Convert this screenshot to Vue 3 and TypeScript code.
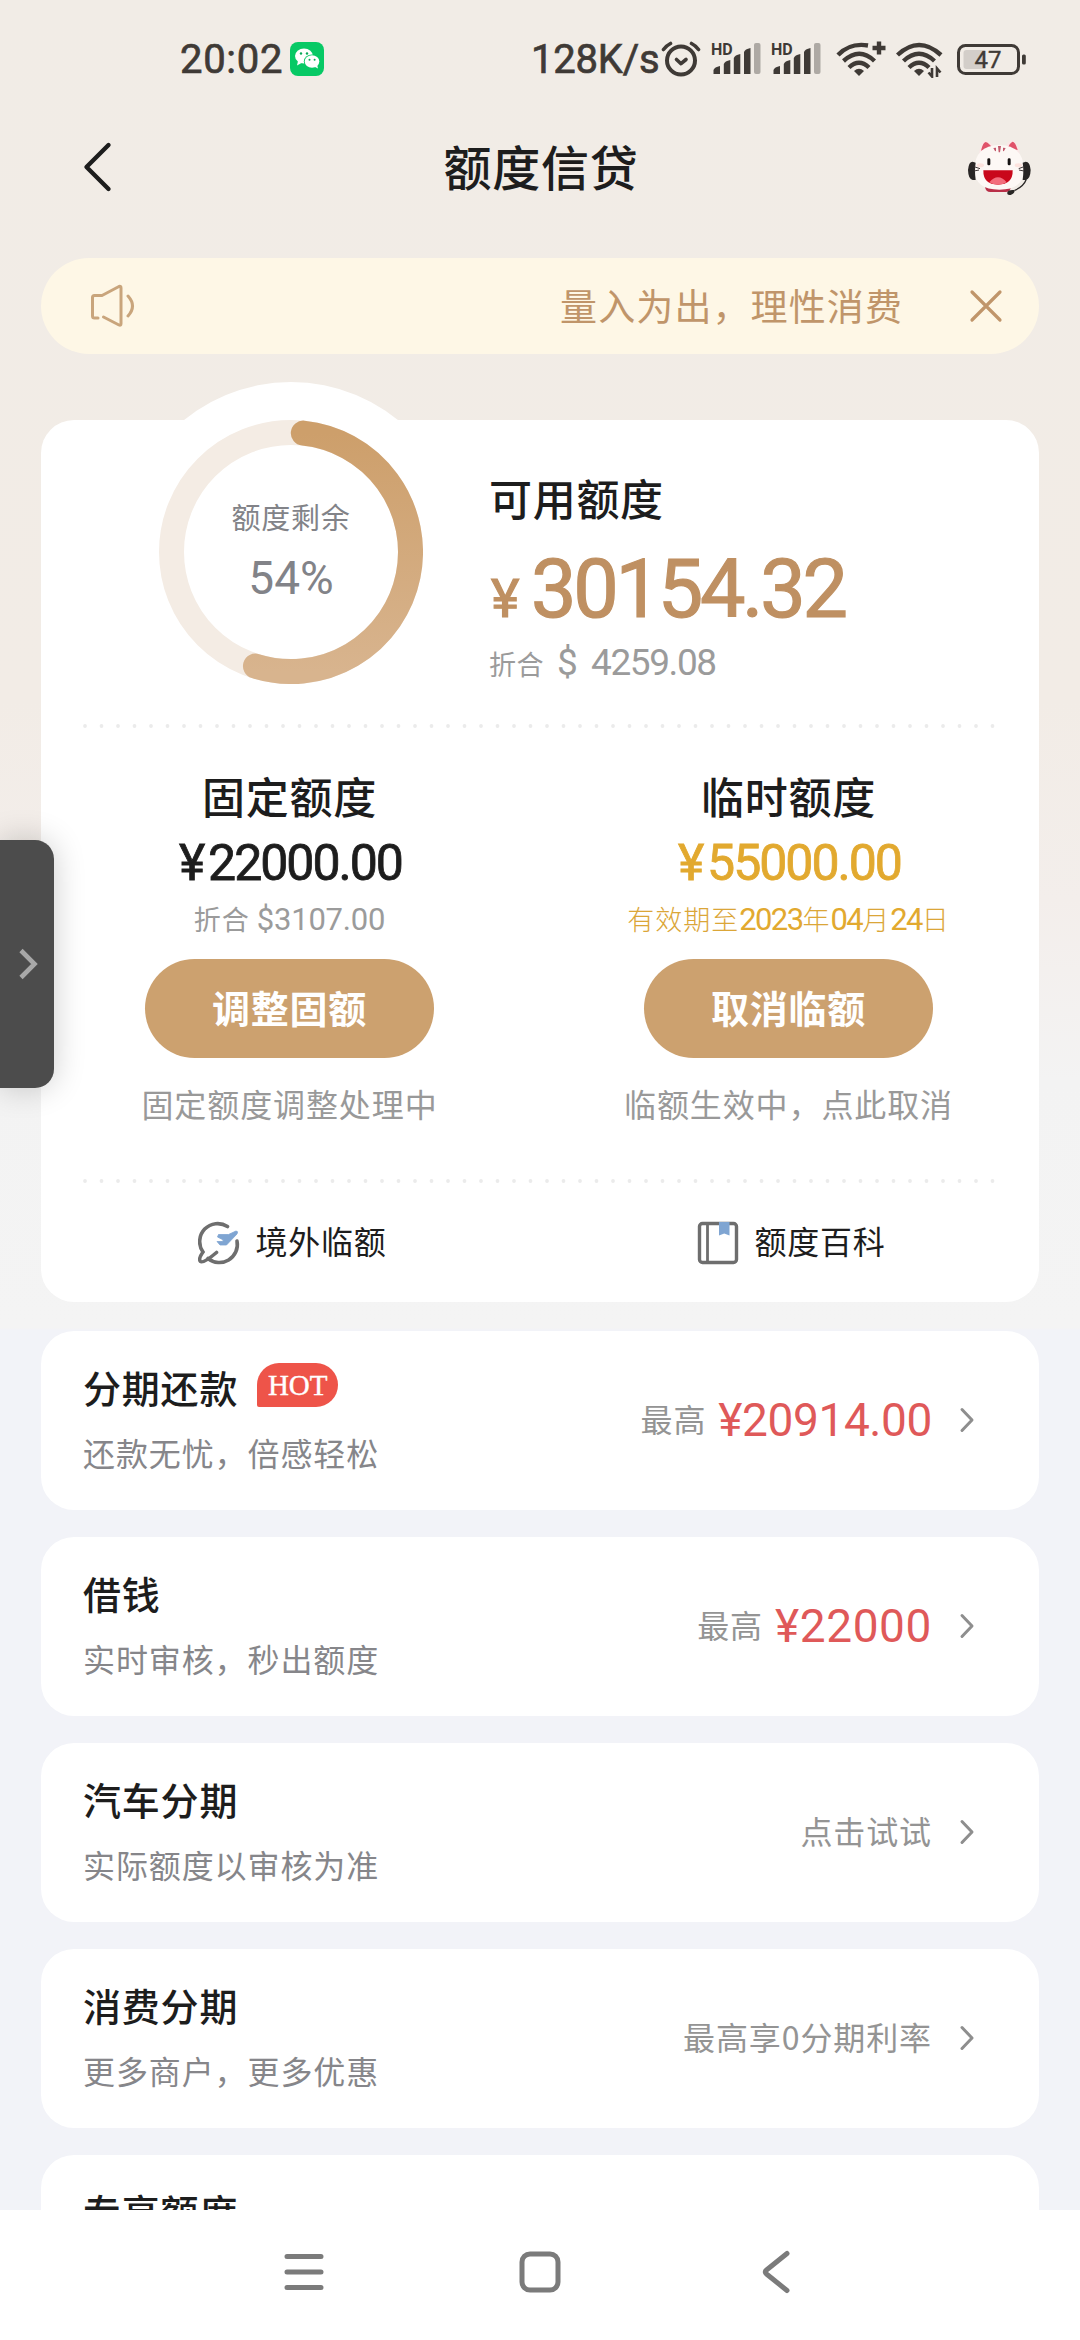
<script setup lang="ts">
interface Quota {
  title: string
  amount: string
  sub: string
  subNum?: string
  dateParts?: string[]
  button: string
  note: string
  gold: boolean
}

interface Product {
  title: string
  desc: string
  hot?: boolean
  label?: string
  price?: string
  long?: boolean
}

const quotas: Quota[] = [
  { title: '固定额度', amount: '22000.00', sub: '折合', subNum: '$3107.00', button: '调整固额', note: '固定额度调整处理中', gold: false },
  { title: '临时额度', amount: '55000.00', sub: '', dateParts: ['有效期至', '2023', '年', '04', '月', '24', '日'], button: '取消临额', note: '临额生效中，点此取消', gold: true },
]

const products: Product[] = [
  { title: '分期还款', desc: '还款无忧，倍感轻松', hot: true, label: '最高', price: '¥20914.00', long: true },
  { title: '借钱', desc: '实时审核，秒出额度', label: '最高', price: '¥22000' },
  { title: '汽车分期', desc: '实际额度以审核为准', label: '点击试试' },
  { title: '消费分期', desc: '更多商户，更多优惠', label: '最高享0分期利率' },
  { title: '专享额度', desc: '' },
]

const signalBars = [
  { x: 2.5, y: 24, h: 8 },
  { x: 12.8, y: 18, h: 14 },
  { x: 22.8, y: 12, h: 20 },
  { x: 33, y: 6, h: 26 },
]

// Endpoints of the remaining-quota arc, in degrees clockwise from the top.
const point = (deg: number): string => {
  const a = (deg * Math.PI) / 180
  return `${(132 + 119.5 * Math.sin(a)).toFixed(2)} ${(132 - 119.5 * Math.cos(a)).toFixed(2)}`
}
const arc = `M${point(5.9)}A119.5 119.5 0 1 1 ${point(197.3)}`
</script>

<template>
  <div class="page">
    <div class="status">
      <span class="clock">20:02</span>
      <svg class="wechat" viewBox="0 0 34 34">
        <rect width="34" height="34" rx="8" fill="#07c965" />
        <ellipse cx="14" cy="14" rx="9" ry="7.6" fill="#fff" />
        <path d="M8 19l-1 4.500 4.500-2.500z" fill="#fff" />
        <ellipse cx="22" cy="19.500" rx="8.200" ry="7" fill="#07c965" />
        <ellipse cx="22" cy="19.500" rx="7.300" ry="6.200" fill="#fff" />
        <path d="M24 24.500l4 2-1-4z" fill="#fff" />
        <g fill="#07a957">
          <circle cx="11" cy="11.500" r="1.200" /><circle cx="17" cy="11.500" r="1.200" />
          <circle cx="19.500" cy="17.800" r="1" /><circle cx="24.600" cy="17.800" r="1" />
        </g>
      </svg>
      <span class="speed">128K/s</span>
      <svg class="alarm" width="40" height="36" viewBox="0 0 40 36">
        <g fill="none" stroke="#3f3a36" stroke-linecap="round">
          <circle cx="20" cy="19.500" r="14" stroke-width="4" />
          <path d="M15.500 18.500l4.500 4.200 5-4.200" stroke-width="3.600" stroke-linejoin="round" />
          <path d="M2.500 8.500q3-4 7-6M37.500 8.500q-3-4-7-6" stroke-width="3.600" />
        </g>
      </svg>
      <svg v-for="n in 2" :key="n" class="signal" width="54" height="46" viewBox="-2 -6 54 46">
        <text x="0" y="12.500" font-size="16" font-weight="700" fill="#3f3a36">HD</text>
        <path v-for="b in signalBars" :key="b.x" :d="`M${b.x} ${b.y + 4}q1-3 6.500-4v${b.h}h-6.500z`" fill="#3f3a36" />
        <rect x="43" y="1" width="6.500" height="31" rx="2" fill="#aea9a4" />
      </svg>
      <svg class="wifi" width="52" height="38" viewBox="0 0 52 38">
        <g fill="none" stroke="#3f3a36" stroke-width="4.400">
          <path d="M2 15Q14 2.500 32 5.500" /><path d="M7.500 21q16-14.500 31 0" /><path d="M13 27.500q10-9.500 20 0" />
          <path d="M36.500 8h13M43 1.500v13" />
        </g>
        <path d="M23 36l-5-5q5-4.500 10 0z" fill="#3f3a36" />
      </svg>
      <svg class="wifi2" width="48" height="38" viewBox="0 0 48 38">
        <g fill="none" stroke="#3f3a36" stroke-width="4.400">
          <path d="M1.500 15q21.500-20 43.500 0" /><path d="M7.500 21q15.500-14.500 31 0" /><path d="M13 27.500q10-9.500 20 0" />
        </g>
        <path d="M23 36l-5-5q5-4.500 10 0z" fill="#3f3a36" />
        <path d="M36 28v8.500l-3.500-4M41 37v-8.500l3.500 4" fill="none" stroke="#3f3a36" stroke-width="2.600" />
      </svg>
      <svg class="battery" width="70" height="31" viewBox="0 0 70 31">
        <rect x="1.500" y="1.500" width="60" height="28" rx="7" fill="none" stroke="#3f3a36" stroke-width="3" />
        <rect x="6.500" y="6" width="21" height="19" rx="3" fill="#d3cec9" />
        <text x="31" y="24" font-size="24" text-anchor="middle" fill="#3f3a36" stroke="#3f3a36" stroke-width="0.400">47</text>
        <rect x="65" y="10.500" width="3.800" height="10" rx="1.500" fill="#3f3a36" />
      </svg>
    </div>

    <header class="header">
      <svg class="back" width="32" height="54" viewBox="0 0 32 54">
        <path d="M28.500 5L6.500 27l22 22" fill="none" stroke="#1d1d1d" stroke-width="4.400" stroke-linecap="round" stroke-linejoin="round" />
      </svg>
      <h1>额度信贷</h1>
      <svg class="mascot" width="65" height="58" viewBox="82 50 195 174">
        <path d="M118 100Q122 58 138 57Q154 60 164 80zM241 100Q232 57 217 56Q202 60 196 80z" fill="#fbe6e6" />
        <path d="M124 88Q130 63 138 62Q150 66 157 80zM234 86Q227 61 218 61Q209 66 204 80z" fill="#e0526a" />
        <path d="M136 196h78q-2 16-16 16h-46q-14 0-16-16z" fill="#b92f48" />
        <path d="M179 71Q105 72 104 146Q106 205 179 205Q252 205 253 146Q252 72 179 71z" fill="#fdf8f5" />
        <path d="M175 74h9l-3 19h-4zM161 80l8-1v11l-3-1zM198 80l-8-1v11l3-1z" fill="#c3596c" />
        <ellipse cx="122" cy="132" rx="11" ry="6" fill="#fde3de" /><ellipse cx="236" cy="132" rx="11" ry="6" fill="#fde3de" />
        <rect x="143" y="111" width="9" height="21" rx="4" fill="#171313" /><rect x="204" y="111" width="9" height="21" rx="4" fill="#171313" />
        <path d="M131 147h88q1 43-44 43t-44-43z" fill="#c9081b" />
        <path d="M149 183q26-30 52 0-10 7-26 7t-26-7z" fill="#f36e7c" />
        <path d="M99 121q-12 0-14 25 1 28 14 30h9q-4-28 0-52zM258 121q13 0 15 25-1 28-15 30h-9q4-28 0-52z" fill="#292625" />
        <path d="M103 136l18 6M103 149l15-3M253 136l-16 6M253 149l-15-3" stroke="#403838" stroke-width="3" />
        <path d="M260 174q-8 22-35 33" fill="none" stroke="#292625" stroke-width="4" />
        <path d="M203 213q2-9 22-7 1 10-12 15-12 2-10-8z" fill="#292625" />
      </svg>
    </header>

    <main class="content">
      <div class="notice">
        <svg class="speaker" width="48" height="46" viewBox="0 0 48 46">
          <path d="M9 35H5.500Q3.500 35 3.500 33V14.500Q3.500 12.500 5.500 12.500H13L30 3.500Q32 2.700 32 5V40.500Q32 43 30 42L14.500 34" fill="none" stroke="#c9a57c" stroke-width="3" stroke-linecap="round" stroke-linejoin="round" />
          <path d="M39 13Q48 23 39 33" fill="none" stroke="#c9a57c" stroke-width="3" stroke-linecap="round" />
        </svg>
        <span class="notice-text">量入为出，理性消费</span>
        <svg class="close" width="34" height="34" viewBox="0 0 34 34">
          <path d="M3 3l28 28M31 3l-28 28" stroke="#c0956a" stroke-width="3.200" stroke-linecap="round" />
        </svg>
      </div>

      <section class="card">
        <div class="hero">
          <div class="ring">
            <svg width="264" height="264" viewBox="0 0 264 264">
              <defs>
                <linearGradient id="ringFill" x1="0" y1="0" x2="0" y2="1">
                  <stop offset="0" stop-color="#cd9f6b" /><stop offset="1" stop-color="#d8b48e" />
                </linearGradient>
              </defs>
              <circle cx="132" cy="132" r="119.500" fill="none" stroke="#f4ece4" stroke-width="25" />
              <path :d="arc" fill="none" stroke="url(#ringFill)" stroke-width="25" stroke-linecap="round" />
            </svg>
            <div class="ring-label">
              <span class="ring-name">额度剩余</span>
              <span class="ring-value">54%</span>
            </div>
          </div>
          <div class="available">
            <h2>可用额度</h2>
            <div class="total"><span class="yen">¥</span><span>30154.32</span></div>
            <div class="convert"><span class="convert-cn">折合</span><span class="dollar">$</span><span>4259.08</span></div>
          </div>
        </div>
        <svg class="dots" width="998" height="4" viewBox="0 0 998 4">
          <circle v-for="i in 56" :key="i" :cx="44 + (i - 1) * 16.5" cy="2" r="1.900" fill="#ebebeb" />
        </svg>
        <div class="quotas">
          <div v-for="q in quotas" :key="q.title" class="quota" :class="{ gold: q.gold }">
            <h3>{{ q.title }}</h3>
            <div class="amount"><span class="amount-yen">¥</span><span>{{ q.amount }}</span></div>
            <div v-if="q.dateParts" class="sub date">
              <span v-for="(p, i) in q.dateParts" :key="i" :class="{ num: i % 2 === 1 }">{{ p }}</span>
            </div>
            <div v-else class="sub"><span>{{ q.sub }}</span><span class="num usd">{{ q.subNum }}</span></div>
            <button type="button">{{ q.button }}</button>
            <p>{{ q.note }}</p>
          </div>
        </div>
        <svg class="dots" width="998" height="4" viewBox="0 0 998 4">
          <circle v-for="i in 56" :key="i" :cx="44 + (i - 1) * 16.5" cy="2" r="1.900" fill="#ebebeb" />
        </svg>
        <div class="links">
          <div class="link">
            <svg width="42" height="44" viewBox="0 0 42 44">
              <g fill="none" stroke="#6e6e6e" stroke-width="3.600" stroke-linecap="round">
                <path d="M29.500 5.500A18 18 0 0 0 5 31Q0 38 2.500 40.500T18.500 31.500" />
                <path d="M39 20A18 18 0 0 1 10 37.500" />
              </g>
              <path d="M38 10q2.500 0 1 3L28.500 24h-6.500l-3-3.500h5l1.500-1.500-6-3 1-2.500h10z" fill="#7fa5d2" stroke="#7fa5d2" stroke-width="0.800" stroke-linejoin="round" />
            </svg>
            <span>境外临额</span>
          </div>
          <div class="link">
            <svg width="42" height="44" viewBox="0 0 42 44">
              <rect x="2.500" y="2.500" width="37" height="39" rx="3" fill="none" stroke="#6e6e6e" stroke-width="3.400" />
              <path d="M10.500 3v38" stroke="#6e6e6e" stroke-width="2.800" />
              <path d="M22 1h10.500v13.500l-5.250-2-5.250 2z" fill="#7fa5d2" />
            </svg>
            <span>额度百科</span>
          </div>
        </div>
      </section>

      <section class="products">
        <article v-for="p in products" :key="p.title" class="product">
          <div class="product-info">
            <div class="product-title"><h4>{{ p.title }}</h4><span v-if="p.hot" class="hot">HOT</span></div>
            <p>{{ p.desc }}</p>
          </div>
          <div v-if="p.label" class="product-end">
            <span class="label">{{ p.label }}</span>
            <span v-if="p.price" class="price" :class="{ long: p.long }">{{ p.price }}</span>
            <svg width="16" height="28" viewBox="0 0 16 28">
              <path d="M3 3.500L13 14 3 24.500" fill="none" stroke="#8e8e8e" stroke-width="3" stroke-linecap="round" stroke-linejoin="round" />
            </svg>
          </div>
        </article>
      </section>
    </main>

    <nav class="navbar">
      <svg width="42" height="44" viewBox="0 0 42 44">
        <path d="M4 6.500h34M4 22h34M4 37.500h34" stroke="#7b7b7b" stroke-width="5" stroke-linecap="round" />
      </svg>
      <svg width="42" height="44" viewBox="0 0 42 44">
        <rect x="3" y="4" width="36" height="36" rx="8" fill="none" stroke="#7b7b7b" stroke-width="5" />
      </svg>
      <svg width="42" height="44" viewBox="0 0 42 44">
        <path d="M32 3.500L11.500 20q-2.500 2 0 4L32 40.500" fill="none" stroke="#7b7b7b" stroke-width="5" stroke-linecap="round" stroke-linejoin="round" />
      </svg>
    </nav>

    <aside class="drawer">
      <svg width="20" height="32" viewBox="0 0 20 32">
        <path d="M2 2.500L15.500 16 2 29.500" fill="none" stroke="#a8a8a8" stroke-width="4.600" />
      </svg>
    </aside>
  </div>
</template>

<style>
body {
  margin: 0;
}
</style>

<style scoped>
.page {
  position: relative;
  width: 1080px;
  height: 2340px;
  overflow: hidden;
  display: flex;
  flex-direction: column;
  font-family: "Noto Sans CJK SC", sans-serif;
  color: #1d1d1d;
  background: linear-gradient(#f1ece6 0, #f2ece6 700px, #f3eeeb 900px, #f3f3f3 1080px, #f4f4f4 1328px, #f2f3f8 1330px);
}
h1, h2, h3, h4, p {
  margin: 0;
  font-weight: 500;
  white-space: nowrap;
}
svg {
  display: block;
  flex: none;
}
.status {
  height: 118px;
  display: flex;
  align-items: center;
  box-sizing: border-box;
  padding-left: 180px;
  font-family: Roboto, sans-serif;
  color: #3f3a36;
}
.clock,
.speed {
  font-size: 40px;
  font-weight: 400;
  -webkit-text-stroke: 0.7px currentColor;
}
.clock {
  width: 110px;
  padding-top: 1px;
  box-sizing: border-box;
  letter-spacing: 0.7px;
}
.wechat {
  width: 34px;
  height: 34px;
}
.speed {
  width: 129px;
  margin-left: 207px;
  padding-top: 1px;
  letter-spacing: -0.2px;
}
.alarm { margin-left: 1px; }
.signal { margin: 0 -2px 0 8px; }
.wifi { margin-left: 15px; }
.wifi2 { margin-left: 8px; }
.battery { margin-left: 13px; }
.header {
  height: 98px;
  display: flex;
  align-items: center;
  justify-content: space-between;
  padding: 0 48px 0 80px;
}
.header h1 {
  margin: -4px 0 0 3px;
  font-size: 48px;
  line-height: 70px;
  letter-spacing: 0.8px;
}
.content {
  flex: 1;
  min-height: 0;
  overflow: hidden;
  padding: 42px 41px 0;
}
.notice {
  height: 96px;
  border-radius: 48px;
  background: #fef7e6;
  display: flex;
  align-items: center;
  box-sizing: border-box;
  padding: 0 36px 0 48px;
}
.notice-text {
  margin: -2px 66px 0 auto;
  font-size: 37px;
  line-height: 54px;
  letter-spacing: 1.1px;
  color: #c0956a;
}
.card {
  position: relative;
  height: 882px;
  margin-top: 66px;
  border-radius: 33px;
  background: #fff;
}
.card::before {
  content: "";
  position: absolute;
  left: 80px;
  top: -38px;
  width: 340px;
  height: 340px;
  border-radius: 50%;
  background: #fff;
}
.hero {
  position: relative;
  height: 304px;
  display: flex;
}
.ring {
  display: grid;
  width: 264px;
  height: 264px;
  margin-left: 118px;
}
.ring > * {
  grid-area: 1 / 1;
}
.ring-label {
  display: flex;
  flex-direction: column;
  align-items: center;
  padding-top: 76px;
  color: #828388;
}
.ring-name {
  font-size: 29px;
  line-height: 40px;
  letter-spacing: 0.8px;
}
.ring-value {
  margin-top: 17px;
  font: 400 46px/50px Roboto, sans-serif;
}
.available {
  margin-left: 66px;
  padding-top: 47px;
}
.available h2 {
  font-size: 43px;
  line-height: 60px;
  letter-spacing: 0.7px;
}
.total {
  display: flex;
  align-items: baseline;
  height: 80px;
  margin-top: 23px;
  font: 400 81px/80px Roboto, sans-serif;
  letter-spacing: -3.3px;
  -webkit-text-stroke: 1.2px currentColor;
  color: #bf9062;
}
.yen {
  width: 42px;
  padding-left: 2px;
  box-sizing: border-box;
  font-size: 54px;
}
.convert {
  display: flex;
  align-items: baseline;
  height: 40px;
  margin-top: 13px;
  font: 400 37px/40px Roboto, sans-serif;
  letter-spacing: -1.4px;
  color: #9b9b9b;
}
.convert-cn {
  width: 68px;
  font-family: "Noto Sans CJK SC", sans-serif;
  font-size: 27px;
  letter-spacing: 0.5px;
}
.dollar { width: 34px; }
.quotas {
  height: 451px;
  display: grid;
  grid-template-columns: 497px 1fr;
}
.quota {
  display: flex;
  flex-direction: column;
  align-items: center;
  padding-top: 37px;
}
.quota h3 {
  font-size: 43px;
  line-height: 60px;
  letter-spacing: 0.7px;
}
.amount {
  display: flex;
  height: 50px;
  margin-top: 13px;
  font: 400 50px/50px Roboto, sans-serif;
  letter-spacing: -2px;
  -webkit-text-stroke: 0.8px currentColor;
}
.amount-yen { width: 29px; margin-left: 2px; }
.sub {
  display: flex;
  align-items: baseline;
  height: 36px;
  margin-top: 13px;
  font-size: 27px;
  line-height: 36px;
  letter-spacing: 1px;
  color: #9b9b9b;
}
.num {
  font-family: Roboto, sans-serif;
  font-size: 31px;
  letter-spacing: -1px;
}
.usd { margin-left: 7px; letter-spacing: -0.2px; }
.gold .amount { color: #e2a92f; }
.date { color: #dba638; font-weight: 300; }
.date .num { color: #e2a92f; font-weight: 400; letter-spacing: -1.6px; }
.quota button {
  width: 289px;
  height: 99px;
  margin-top: 22px;
  padding: 0 0 3px;
  border: 0;
  border-radius: 50px;
  background: #cca16f;
  color: #fff;
  font: 700 38px/56px "Noto Sans CJK SC", sans-serif;
  letter-spacing: 0.7px;
}
.quota p {
  margin-top: 25px;
  font-size: 32px;
  line-height: 40px;
  font-weight: 400;
  letter-spacing: 0.9px;
  color: #999;
}
.links {
  height: 119px;
  display: grid;
  grid-template-columns: 1fr 1fr;
}
.link {
  display: flex;
  align-items: center;
  justify-content: center;
  padding-left: 4px;
  font-size: 32px;
  letter-spacing: 0.8px;
}
.link span {
  margin: -5px 0 0 15px;
  line-height: 46px;
}
.products {
  display: flex;
  flex-direction: column;
  gap: 27px;
  margin-top: 29px;
}
.product {
  height: 179px;
  flex: none;
  display: flex;
  justify-content: space-between;
  box-sizing: border-box;
  padding: 0 64px 0 42px;
  border-radius: 33px;
  background: #fff;
}
.product-title {
  display: flex;
  height: 56px;
  padding-top: 28px;
}
.product h4 {
  font-size: 38px;
  line-height: 56px;
  letter-spacing: 0.8px;
}
.hot {
  width: 81px;
  height: 44px;
  margin: 4px 0 0 19px;
  border-radius: 22px 22px 22px 2px;
  background: #ee5449;
  color: #fff;
  font: 400 29px/44px "Liberation Serif", serif;
  -webkit-text-stroke: 0.4px currentColor;
  text-align: center;
}
.product p {
  margin-top: 14px;
  font-size: 32px;
  line-height: 46px;
  font-weight: 400;
  letter-spacing: 0.9px;
  color: #86868a;
}
.product-end {
  display: flex;
  align-items: center;
  padding-bottom: 2px;
}
.label {
  margin-top: -4px;
  font-size: 32px;
  line-height: 46px;
  letter-spacing: 0.9px;
  color: #949494;
}
.price {
  margin-left: 12px;
  font: 400 46px/50px Roboto, sans-serif;
  letter-spacing: 0.6px;
  color: #df5959;
}
.price.long { letter-spacing: -0.4px; }
.product-end svg { margin-left: 27px; }
.navbar {
  height: 130px;
  flex: none;
  display: flex;
  justify-content: center;
  gap: 194px;
  box-sizing: border-box;
  padding-top: 40px;
  background: #fff;
}
.drawer {
  position: absolute;
  left: 0;
  top: 840px;
  width: 54px;
  height: 248px;
  display: flex;
  align-items: center;
  box-sizing: border-box;
  padding-left: 19px;
  border-radius: 0 19px 19px 0;
  background: #4c4c4c;
  box-shadow: 0 0 32px rgba(0, 0, 0, 0.2);
}
</style>
